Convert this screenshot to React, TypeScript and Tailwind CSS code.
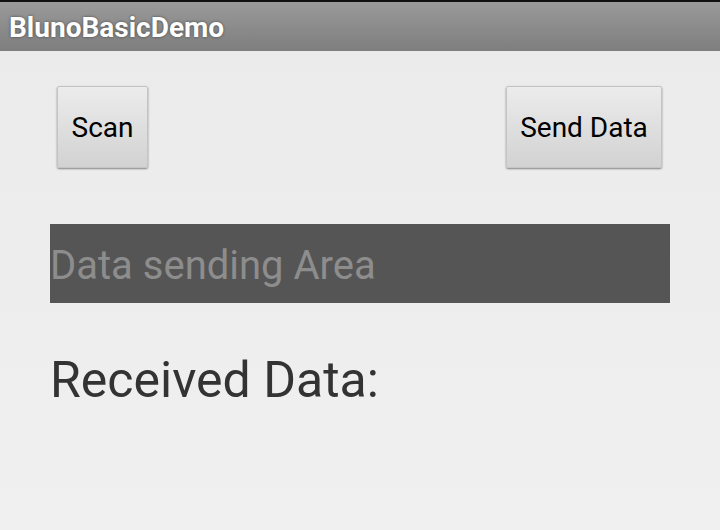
export default function App() {
  return (
    <div className="flex h-[530px] w-[720px] flex-col overflow-hidden bg-[#ececec] font-['Roboto',sans-serif]">
      <div className="h-[2px] bg-[#111]" />
      <div className="flex h-[49px] items-center bg-gradient-to-b from-[#9a9a9a] to-[#7e7e7e] pl-[9px] pt-[2px]">
        <h1 className="text-[28px] font-bold leading-none text-white [text-shadow:0_0_3px_rgba(0,0,0,0.5)]">
          BlunoBasicDemo
        </h1>
      </div>
      <div className="flex flex-1 flex-col bg-gradient-to-b from-[#ebebeb] to-[#f0f0f0] px-[50px]">
        <div className="mt-[35px] flex justify-between pl-[7px] pr-[8px]">
          <button
            type="button"
            className="h-[82px] w-[91px] rounded-[2px] border border-[#c4c4c4] bg-gradient-to-b from-[#ececec] to-[#d2d2d2] pt-[2px] text-[28px] text-black shadow-[0_1px_2px_rgba(0,0,0,0.45)]"
          >
            Scan
          </button>
          <button
            type="button"
            className="h-[82px] w-[156px] rounded-[2px] border border-[#c4c4c4] bg-gradient-to-b from-[#ececec] to-[#d2d2d2] pt-[2px] text-[28px] text-black shadow-[0_1px_2px_rgba(0,0,0,0.45)]"
          >
            Send Data
          </button>
        </div>
        <div className="mt-[56px] flex h-[79px] items-center bg-[#555555]">
          <span className="pt-[4px] text-[40px] leading-none text-[#8d8d8d]">Data sending Area</span>
        </div>
        <p className="mt-[52px] text-[50px] leading-none text-[#333333]">Received Data:</p>
      </div>
    </div>
  )
}
